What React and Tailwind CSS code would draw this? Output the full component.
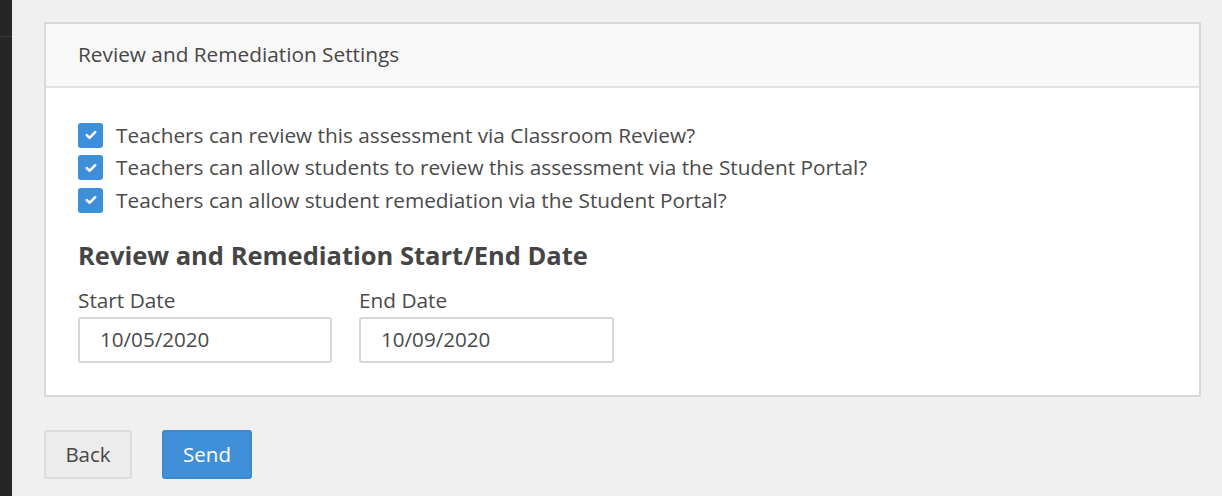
const Check = () => (
  <span className="flex items-center justify-center w-[25px] h-[25px] rounded-[3px] bg-[#3c8fd8] shrink-0">
    <svg width="12" height="10" viewBox="0 0 12 10" fill="none">
      <path d="M1.8 5.2 L4.6 7.8 L10.2 2.2" stroke="white" strokeWidth="2.5" strokeLinecap="round" strokeLinejoin="round" />
    </svg>
  </span>
);

const options = [
  'Teachers can review this assessment via Classroom Review?',
  'Teachers can allow students to review this assessment via the Student Portal?',
  'Teachers can allow student remediation via the Student Portal?',
];

const App = () => {
  return (
    <div className="flex min-h-[496px] bg-[#f0f0f0] text-[#4a4a4a]" style={{ fontFamily: '"Open Sans", "Liberation Sans", sans-serif' }}>
      <div className="w-[12px] bg-[#262626] shrink-0">
        <div className="h-[37px] border-b border-[#3a3a3a]"></div>
      </div>
      <div className="flex-1 pl-[32px] pr-[21px] pt-[22px]">
        <div className="border-2 border-[#d9d9d9] bg-white">
          <div className="h-[64px] flex items-center px-[32px] bg-[#f8f8f8] border-b-2 border-[#e2e2e2] text-[20.8px] text-[#474747]">
            Review and Remediation Settings
          </div>
          <div className="px-[32px] pt-[31px] pb-[32px]">
            {options.map((o) => (
              <div key={o} className="h-[32.5px] flex items-center gap-[13px] text-[20.8px]">
                <Check />
                <span>{o}</span>
              </div>
            ))}
            <h3 className="mt-[23px] text-[25.5px] leading-[30px] font-bold text-[#454545]">
              Review and Remediation Start/End Date
            </h3>
            <div className="mt-[18px] flex gap-[27px]">
              <div>
                <div className="text-[20.8px] leading-[24px]">Start Date</div>
                <div className="mt-[5px] w-[254px] h-[46px] border-2 border-[#d6d6d6] rounded-[3px] flex items-center px-[20px] text-[20.6px]">
                  10/05/2020
                </div>
              </div>
              <div>
                <div className="text-[20.8px] leading-[24px]">End Date</div>
                <div className="mt-[5px] w-[255px] h-[46px] border-2 border-[#d6d6d6] rounded-[3px] flex items-center px-[20px] text-[20.6px]">
                  10/09/2020
                </div>
              </div>
            </div>
          </div>
        </div>
        <div className="mt-[33px] flex gap-[30px]">
          <button className="w-[88px] h-[49px] rounded-[3px] border-2 border-[#dcdcdc] bg-[#ececec] text-[20.5px] text-[#474747]">
            Back
          </button>
          <button className="w-[90px] h-[49px] rounded-[3px] border-2 border-[#3a89d2] bg-[#3f90d8] text-[20.5px] text-white">
            Send
          </button>
        </div>
      </div>
    </div>
  );
};

export default App;
